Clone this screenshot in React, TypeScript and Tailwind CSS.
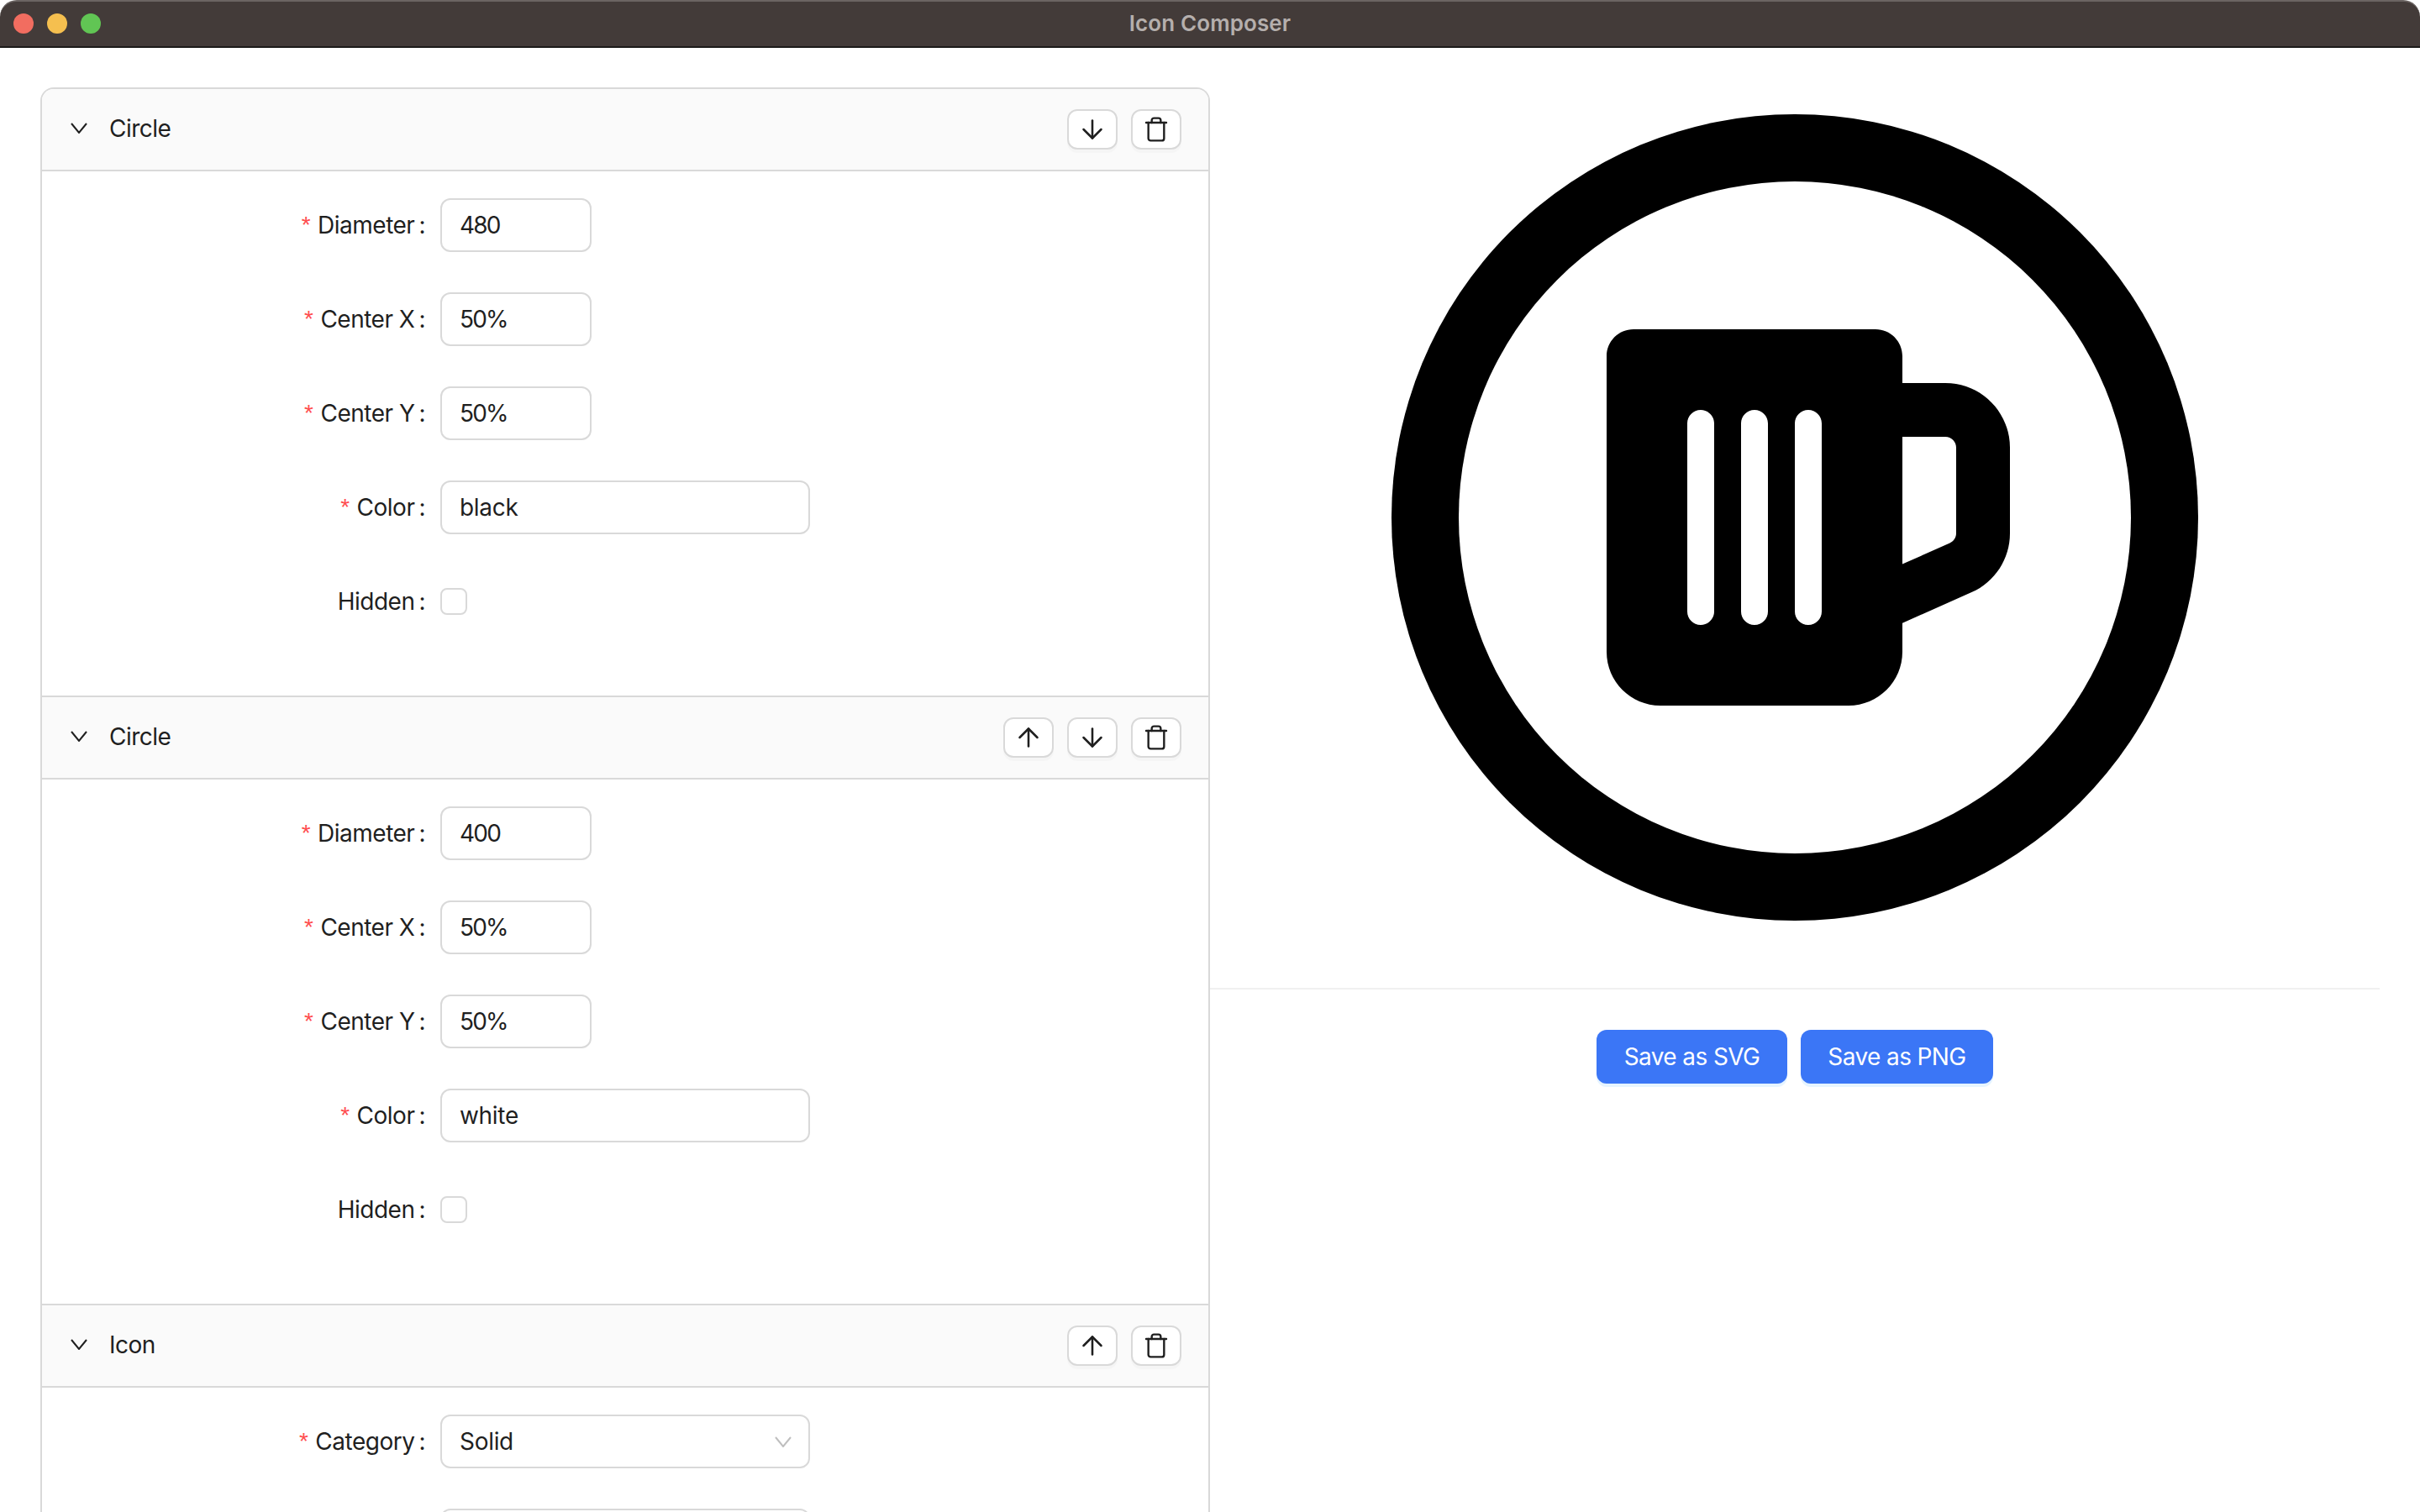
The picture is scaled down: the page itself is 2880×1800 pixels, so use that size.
import React from 'react';
import { ArrowDown, ArrowUp, Trash } from 'lucide-react';

const Chevron = ({ className }: { className: string }) => (
  <svg viewBox="0 0 20 13" fill="none" stroke="currentColor" strokeWidth="2" className={className}>
    <path d="M1 1l9 11 9-11" />
  </svg>
);

const IconButton = ({ children }: { children: React.ReactNode }) => (
  <button className="flex h-12 w-[60px] items-center justify-center rounded-xl border-2 border-[#d9d9d9] bg-white text-[#1f1f1f] shadow-[0_4px_0_rgba(0,0,0,0.02)]">
    {children}
  </button>
);

const Row = ({ label, required, children }: { label?: string; required?: boolean; children: React.ReactNode }) => (
  <div className="mb-12 flex h-16 items-center">
    <div className="flex w-[442px] shrink-0 items-center justify-end pr-[18px] text-[28px] tracking-[-0.5px] text-[#1f1f1f]">
      {required && <span className="mr-[9px] font-['Liberation_Sans'] text-[28px] leading-none text-[#ff4d4f]">*</span>}
      {label && <span>{label}</span>}
      {label && <span className="ml-[5px]">:</span>}
    </div>
    {children}
  </div>
);

const TextInput = ({ value, wide, numeric }: { value: string; wide?: boolean; numeric?: boolean }) => (
  <input
    readOnly
    value={value}
    className={`h-16 rounded-xl border-2 border-[#d9d9d9] bg-white px-[21px] text-[28px] text-[#1f1f1f] outline-none ${wide ? 'w-[440px]' : 'w-[180px]'} ${numeric ? 'tracking-[-1.8px]' : 'tracking-[-0.3px]'}`}
  />
);

const CircleFields = ({ diameter, color }: { diameter: string; color: string }) => (
  <div className="p-8">
    <Row label="Diameter" required><TextInput value={diameter} numeric /></Row>
    <Row label="Center X" required><TextInput value="50%" numeric /></Row>
    <Row label="Center Y" required><TextInput value="50%" numeric /></Row>
    <Row label="Color" required><TextInput value={color} wide /></Row>
    <Row label="Hidden">
      <div className="h-8 w-8 rounded-lg border-2 border-[#d9d9d9] bg-white" />
    </Row>
  </div>
);

const PanelHeader = ({ title, up, down }: { title: string; up?: boolean; down?: boolean }) => (
  <div className="flex h-[98px] items-center justify-between border-b-2 border-[#d9d9d9] bg-[#fafafa] pl-8 pr-8">
    <div className="flex items-center pb-[3px] text-[28px] tracking-[-0.5px] text-[#1f1f1f]">
      <Chevron className="ml-[2px] h-[13px] w-5 text-[#1f1f1f]" />
      <span className="ml-[26px]">{title}</span>
    </div>
    <div className="flex gap-4">
      {up && <IconButton><ArrowUp size={36} strokeWidth={1.7} /></IconButton>}
      {down && <IconButton><ArrowDown size={36} strokeWidth={1.7} /></IconButton>}
      <IconButton><Trash size={32} strokeWidth={1.8} /></IconButton>
    </div>
  </div>
);

const MUG =
  'M32 64c0-17.7 14.3-32 32-32H352c17.7 0 32 14.3 32 32V96h51.2c42.4 0 76.8 34.4 76.8 76.8V274.9c0 30.4-17.9 57.9-45.6 70.2L384 381.7V416c0 35.3-28.7 64-64 64H96c-35.3 0-64-28.7-64-64V64zM384 311.6l56.4-25.1c4.6-2.1 7.6-6.6 7.6-11.7V172.8c0-7.1-5.7-12.8-12.8-12.8H384V311.6zM160 144c0-8.8-7.2-16-16-16s-16 7.2-16 16V368c0 8.8 7.2 16 16 16s16-7.2 16-16V144zm64 0c0-8.8-7.2-16-16-16s-16 7.2-16 16V368c0 8.8 7.2 16 16 16s16-7.2 16-16V144zm64 0c0-8.8-7.2-16-16-16s-16 7.2-16 16V368c0 8.8 7.2 16 16 16s16-7.2 16-16V144z';

const App: React.FC = () => {
  return (
    <div className="h-[1800px] w-[2880px] overflow-hidden bg-white font-['Inter',sans-serif]">
      {/* Title bar */}
      <div className="relative flex h-[57px] items-center justify-center rounded-t-[20px] border-t-2 border-b-2 border-t-[#6b6462] border-b-[#1c1a19] bg-[#433b39] pb-[2px]">
        <div className="absolute left-4 top-[14px] flex gap-4">
          <div className="h-6 w-6 rounded-full bg-[#f26d60]" />
          <div className="h-6 w-6 rounded-full bg-[#f5bf4f]" />
          <div className="h-6 w-6 rounded-full bg-[#61c554]" />
        </div>
        <span className="text-[26px] font-semibold tracking-[0.1px] text-[#b5afad]">Icon Composer</span>
      </div>

      <div className="flex px-12 pt-[47px]">
        {/* Layers */}
        <div className="w-[1392px] shrink-0 rounded-t-2xl border-x-2 border-t-2 border-[#d9d9d9]">
          <div className="overflow-hidden rounded-t-[14px]">
            <PanelHeader title="Circle" down />
          </div>
          <CircleFields diameter="480" color="black" />
          <div className="border-t-2 border-[#d9d9d9]">
            <PanelHeader title="Circle" up down />
          </div>
          <CircleFields diameter="400" color="white" />
          <div className="border-t-2 border-[#d9d9d9]">
            <PanelHeader title="Icon" up />
          </div>
          <div className="p-8">
            <Row label="Category" required>
              <div className="flex h-16 w-[440px] items-center justify-between rounded-xl border-2 border-[#d9d9d9] bg-white pl-[21px] pr-5 text-[28px] tracking-[-0.3px] text-[#1f1f1f]">
                <span>Solid</span>
                <Chevron className="h-[13px] w-5 text-[#bfbfbf]" />
              </div>
            </Row>
            <Row>
              <div className="h-16 w-[440px] rounded-xl border-2 border-[#d9d9d9] bg-white" />
            </Row>
          </div>
        </div>

        {/* Preview */}
        <div className="flex w-[1392px] shrink-0 flex-col">
          <div className="flex justify-center">
            <svg width="1024" height="1024" viewBox="0 0 1024 1024">
              <circle cx="512" cy="512" r="480" fill="black" />
              <circle cx="512" cy="512" r="400" fill="white" />
              <path d={MUG} fill="black" transform="translate(256 256)" />
            </svg>
          </div>
          <div className="my-12 h-[2px] bg-[#f0f0f0]" />
          <div className="flex justify-center gap-4">
            <button className="h-16 w-[227px] rounded-xl bg-[#3b76f6] text-[28px] tracking-[-0.6px] text-white shadow-[0_4px_0_rgba(5,145,255,0.1)]">Save as SVG</button>
            <button className="h-16 w-[229px] rounded-xl bg-[#3b76f6] text-[28px] tracking-[-0.6px] text-white shadow-[0_4px_0_rgba(5,145,255,0.1)]">Save as PNG</button>
          </div>
        </div>
      </div>
    </div>
  );
};

export default App;
